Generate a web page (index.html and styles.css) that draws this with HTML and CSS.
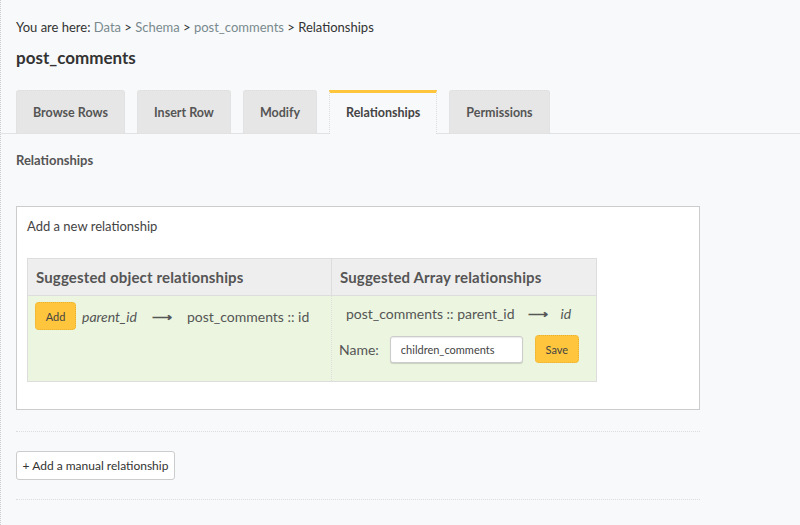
FILE: index.html
```html
<!DOCTYPE html>
<html>
<head>
<meta charset="utf-8">
<link rel="stylesheet" href="styles.css">
</head>
<body>
<div class="page">
  <div class="crumbs">You are here: <a>Data</a> &gt; <a>Schema</a> &gt; <a>post_comments</a> &gt; Relationships</div>
  <h1 class="title">post_comments</h1>
  <div class="tabs">
    <div class="tab">Browse Rows</div>
    <div class="tab">Insert Row</div>
    <div class="tab">Modify</div>
    <div class="tab active">Relationships</div>
    <div class="tab">Permissions</div>
  </div>
  <div class="content">
    <h2 class="subtitle">Relationships</h2>
    <div class="box">
      <div class="box-title">Add a new relationship</div>
      <table class="sugg">
        <thead>
          <tr><th class="c1">Suggested object relationships</th><th class="c2">Suggested Array relationships</th></tr>
        </thead>
        <tbody>
          <tr>
            <td class="c1">
              <div class="obj-row"><button class="ybtn add">Add</button><i class="col">parent_id</i><span class="arrow">&#10230;</span><span>post_comments :: id</span></div>
            </td>
            <td class="c2">
              <div class="arr-row"><span>post_comments :: parent_id</span><span class="arrow">&#10230;</span><i>id</i></div>
              <div class="name-row"><span class="lbl">Name:</span><input class="name" value="children_comments"><button class="ybtn save">Save</button></div>
            </td>
          </tr>
        </tbody>
      </table>
    </div>
    <hr class="sep">
    <button class="manual">+ Add a manual relationship</button>
    <hr class="sep sep2">
  </div>
</div>
</body>
</html>
```
FILE: styles.css
```css
html, body { margin: 0; padding: 0; }
body {
  background: #f8f9fa;
  font-family: Lato, "Open Sans", sans-serif;
  color: #333;
  width: 800px;
  height: 525px;
  overflow: hidden;
}
.page {
  border-left: 1px dotted #ccc;
  height: 525px;
  box-sizing: border-box;
}
.crumbs {
  padding: 19px 0 0 15px;
  font-size: 13px;
  line-height: 16px;
  color: #333;
}
.crumbs a { color: #788a8f; }
.title {
  margin: 13px 0 0 15px;
  font-size: 17px;
  line-height: 20px;
  font-weight: 700;
  color: #333;
}
.tabs {
  display: flex;
  gap: 12px;
  padding-left: 15px;
  margin-top: 22px;
  border-bottom: 1px solid #e2e2e2;
  height: 43px;
}
.tab {
  background: #e6e6e6;
  border: 1px dotted #ddd;
  border-bottom: none;
  border-radius: 3px 3px 0 0;
  padding: 0 16px;
  font-size: 12.5px;
  font-weight: 700;
  color: #555;
  display: flex;
  align-items: center;
  height: 43px;
  box-sizing: border-box;
}
.tab.active {
  background: #f8f9fa;
  border-top: 3px solid #fec53d;
  border-radius: 0;
  color: #444;
  height: 44px;
  margin-bottom: -1px;
  border-left: 1px dotted #ddd;
  border-right: 1px dotted #ddd;
  padding-bottom: 2px;
}
.content { padding: 0 100px 0 15px; }
.subtitle {
  margin: 18px 0 0 0;
  font-size: 13px;
  line-height: 16px;
  font-weight: 700;
  color: #555;
}
.box {
  margin-top: 38px;
  background: #fff;
  border: 1px solid #ccc;
  height: 204px;
  box-sizing: border-box;
  padding: 11px 10px 0 10px;
}
.box-title { font-size: 13px; line-height: 16px; color: #444; }
.sugg {
  margin-top: 24px;
  border-collapse: collapse;
  border: 1px solid #ddd;
  font-size: 14px;
  color: #555;
}
.sugg th {
  background: #eeeeee;
  height: 37px;
  text-align: left;
  padding: 0 8px;
  font-size: 15px;
  letter-spacing: 0.15px;
  font-weight: 700;
  color: #555;
  border: 1px solid #ddd;
  box-sizing: border-box;
}
.sugg th.c1 { width: 304px; }
.sugg th.c2 { width: 265px; }
.sugg td {
  background: #ebf5e0;
  vertical-align: top;
  height: 85px;
  border: 1px dotted #ddd;
  padding: 0 7px;
}
.obj-row {
  display: flex;
  align-items: center;
  gap: 5px;
  margin-top: 6px;
}
.ybtn {
  background: #fec53d;
  border: 1px dotted #e8b030;
  border-radius: 4px;
  font-family: Lato, "Open Sans", sans-serif;
  font-size: 11px;
  color: #444;
  padding: 0;
}
.add { width: 41px; height: 28px; }
.arrow { padding: 0 10px; font-weight: 700; }
.col { margin-left: 1px; }
.arr-row {
  display: flex;
  align-items: center;
  margin: 8px 0 0 7px;
  height: 18px;
}
.arr-row .arrow { padding: 0 13px; }
.name-row {
  display: flex;
  align-items: center;
  margin-top: 13px;
}
.lbl { margin-right: 11px; }
.name {
  width: 133px;
  height: 27px;
  box-sizing: border-box;
  border: 1px solid #ccc;
  border-radius: 3px;
  box-shadow: inset 0 1px 1px rgba(0,0,0,.08), 0 1px 1px rgba(0,0,0,.15);
  font-family: Lato, "Open Sans", sans-serif;
  font-size: 11px;
  padding: 0 10px;
  color: #444;
}
.save { width: 44px; height: 28px; margin-left: 12px; }
.sep {
  border: 0;
  border-top: 1px dotted #ddd;
  margin: 21px 0 0 0;
}
.manual {
  margin-top: 19px;
  background: #fff;
  border: 1px solid #ccc;
  border-radius: 3px;
  height: 29px;
  width: 159px;
  font-family: Lato, "Open Sans", sans-serif;
  font-size: 12px;
  color: #333;
  padding: 0;
}
.sep2 { margin-top: 19px; }
```
